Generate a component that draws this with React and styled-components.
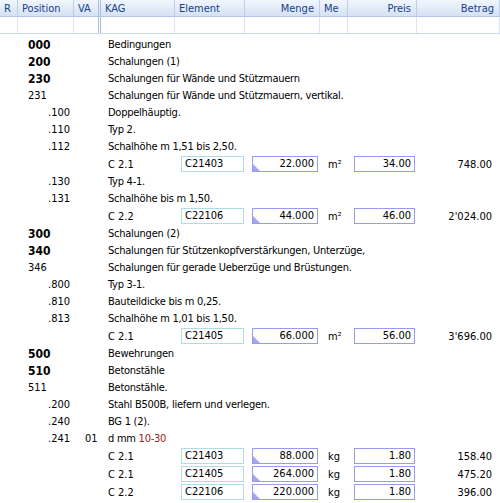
import React from "react";
import styled, { createGlobalStyle } from "styled-components";

const Global = createGlobalStyle`
  html, body { margin: 0; padding: 0; background: #fff; }
  body { font-family: "DejaVu Sans Condensed", "DejaVu Sans", Tahoma, sans-serif; font-size: 11px; color: #000; }
`;

const COLS = "18px 56px 27px 74px 70px 75px 28px 69px 83px";

const Grid = styled.div`
  width: 500px;
  height: 503px;
  overflow: hidden;
  background: #fff;
`;

const HeaderRow = styled.div`
  display: grid;
  grid-template-columns: ${COLS};
  height: 17px;
  background: linear-gradient(#f1f6fd, #d5e2f3);
  border-bottom: 1px solid #b3c7e3;
  box-sizing: border-box;
`;

const HeadCell = styled.div`
  display: flex;
  align-items: center;
  justify-content: ${(p) => (p.$right ? "flex-end" : "flex-start")};
  padding: 0 ${(p) => (p.$right ? "5px" : "0")} 0 ${(p) => (p.$right ? "0" : "4px")};
  color: #15428b;
  font-size: 11px;
  border-right: ${(p) => (p.$double ? "3px double #a9bfdf" : "1px solid #bccfe8")};
  box-sizing: border-box;
  white-space: nowrap;
  overflow: hidden;
`;

const FilterRow = styled.div`
  display: grid;
  grid-template-columns: ${COLS};
  height: 17px;
  background: #fff;
  border-bottom: 1px solid #c9d8ec;
  box-sizing: border-box;
`;

const FilterCell = styled.div`
  border-right: ${(p) => (p.$double ? "3px double #a9bfdf" : "1px solid #dae5f3")};
  box-sizing: border-box;
`;

const Body = styled.div`
  padding-top: 2px;
  display: flex;
  flex-direction: column;
`;

const Row = styled.div`
  display: grid;
  grid-template-columns: ${COLS};
  height: ${(p) => (p.$input ? "18px" : "17px")};
  align-items: center;
  white-space: nowrap;
`;

const PosCell = styled.div`
  grid-column: 2;
  padding-left: ${(p) => (p.$sub ? "30px" : "10px")};
  font-weight: ${(p) => (p.$bold ? 700 : 400)};
  font-size: ${(p) => (p.$bold ? "12px" : "11px")};
`;

const VaCell = styled.div`
  grid-column: 3;
  padding-left: 11px;
`;

const TextCell = styled.div`
  grid-column: 4 / -1;
  padding-left: 7px;
  letter-spacing: -0.25px;
`;

const KagCell = styled.div`
  grid-column: 4;
  padding-left: 7px;
`;

const Red = styled.span`
  color: #9e1b22;
`;

const FieldWrap = styled.div`
  grid-column: ${(p) => p.$col};
  padding-left: ${(p) => p.$left}px;
  display: flex;
`;

const Field = styled.div`
  position: relative;
  box-sizing: border-box;
  width: ${(p) => p.$w}px;
  height: 16px;
  line-height: 14px;
  border: 1px solid ${(p) => (p.$kind === "el" ? "#b0dbe8" : "#9a9af2")};
  text-align: ${(p) => (p.$kind === "el" ? "left" : "right")};
  padding: ${(p) => (p.$kind === "el" ? "0 0 0 3px" : "0 3px 0 0")};
  background: #fff;
  overflow: hidden;
`;

const Corner = styled.span`
  position: absolute;
  left: 0;
  bottom: 0;
  width: 0;
  height: 0;
  border-left: 7px solid #a6a6f0;
  border-top: 7px solid transparent;
`;

const UnitCell = styled.div`
  grid-column: 7;
  padding-left: 8px;
`;

const AmountCell = styled.div`
  grid-column: 9;
  text-align: right;
  padding-right: 8px;
`;

const headers = [
  { t: "R" },
  { t: "Position" },
  { t: "VA", double: true },
  { t: "KAG" },
  { t: "Element" },
  { t: "Menge", right: true },
  { t: "Me" },
  { t: "Preis", right: true },
  { t: "Betrag", right: true },
];

const rows = [
  { pos: "000", lvl: "b", text: "Bedingungen" },
  { pos: "200", lvl: "b", text: "Schalungen (1)" },
  { pos: "230", lvl: "b", text: "Schalungen für Wände und Stützmauern" },
  { pos: "231", lvl: "n", text: "Schalungen für Wände und Stützmauern, vertikal." },
  { pos: ".100", lvl: "s", text: "Doppelhäuptig." },
  { pos: ".110", lvl: "s", text: "Typ 2." },
  { pos: ".112", lvl: "s", text: "Schalhöhe m 1,51 bis 2,50." },
  { kag: "C 2.1", el: "C21403", menge: "22.000", me: "m²", preis: "34.00", betrag: "748.00" },
  { pos: ".130", lvl: "s", text: "Typ 4-1." },
  { pos: ".131", lvl: "s", text: "Schalhöhe bis m 1,50." },
  { kag: "C 2.2", el: "C22106", menge: "44.000", me: "m²", preis: "46.00", betrag: "2'024.00" },
  { pos: "300", lvl: "b", text: "Schalungen (2)" },
  { pos: "340", lvl: "b", text: "Schalungen für Stützenkopfverstärkungen, Unterzüge," },
  { pos: "346", lvl: "n", text: "Schalungen für gerade Ueberzüge und Brüstungen." },
  { pos: ".800", lvl: "s", text: "Typ 3-1." },
  { pos: ".810", lvl: "s", text: "Bauteildicke bis m 0,25." },
  { pos: ".813", lvl: "s", text: "Schalhöhe m 1,01 bis 1,50." },
  { kag: "C 2.1", el: "C21405", menge: "66.000", me: "m²", preis: "56.00", betrag: "3'696.00" },
  { pos: "500", lvl: "b", text: "Bewehrungen" },
  { pos: "510", lvl: "b", text: "Betonstähle" },
  { pos: "511", lvl: "n", text: "Betonstähle." },
  { pos: ".200", lvl: "s", text: "Stahl B500B, liefern und verlegen." },
  { pos: ".240", lvl: "s", text: "BG 1 (2)." },
  { pos: ".241", lvl: "s", va: "01", text: "d mm ", red: "10-30" },
  { kag: "C 2.1", el: "C21403", menge: "88.000", me: "kg", preis: "1.80", betrag: "158.40" },
  { kag: "C 2.1", el: "C21405", menge: "264.000", me: "kg", preis: "1.80", betrag: "475.20" },
  { kag: "C 2.2", el: "C22106", menge: "220.000", me: "kg", preis: "1.80", betrag: "396.00" },
];

function TextRow({ r }) {
  return (
    <Row>
      <PosCell $bold={r.lvl === "b"} $sub={r.lvl === "s"}>{r.pos}</PosCell>
      {r.va && <VaCell>{r.va}</VaCell>}
      <TextCell>
        {r.text}
        {r.red && <Red>{r.red}</Red>}
      </TextCell>
    </Row>
  );
}

function ItemRow({ r }) {
  return (
    <Row $input>
      <KagCell>{r.kag}</KagCell>
      <FieldWrap $col={5} $left={6}>
        <Field $kind="el" $w={63}>{r.el}</Field>
      </FieldWrap>
      <FieldWrap $col={6} $left={7}>
        <Field $kind="num" $w={66}>
          <Corner />
          {r.menge}
        </Field>
      </FieldWrap>
      <UnitCell>{r.me}</UnitCell>
      <FieldWrap $col={8} $left={6}>
        <Field $kind="num" $w={61}>{r.preis}</Field>
      </FieldWrap>
      <AmountCell>{r.betrag}</AmountCell>
    </Row>
  );
}

export default function App() {
  return (
    <>
      <Global />
      <Grid>
        <HeaderRow>
          {headers.map((h) => (
            <HeadCell key={h.t} $right={h.right} $double={h.double}>
              {h.t}
            </HeadCell>
          ))}
        </HeaderRow>
        <FilterRow>
          {headers.map((h) => (
            <FilterCell key={h.t} $double={h.double} />
          ))}
        </FilterRow>
        <Body>
          {rows.map((r, i) =>
            r.kag ? <ItemRow key={i} r={r} /> : <TextRow key={i} r={r} />
          )}
        </Body>
      </Grid>
    </>
  );
}
